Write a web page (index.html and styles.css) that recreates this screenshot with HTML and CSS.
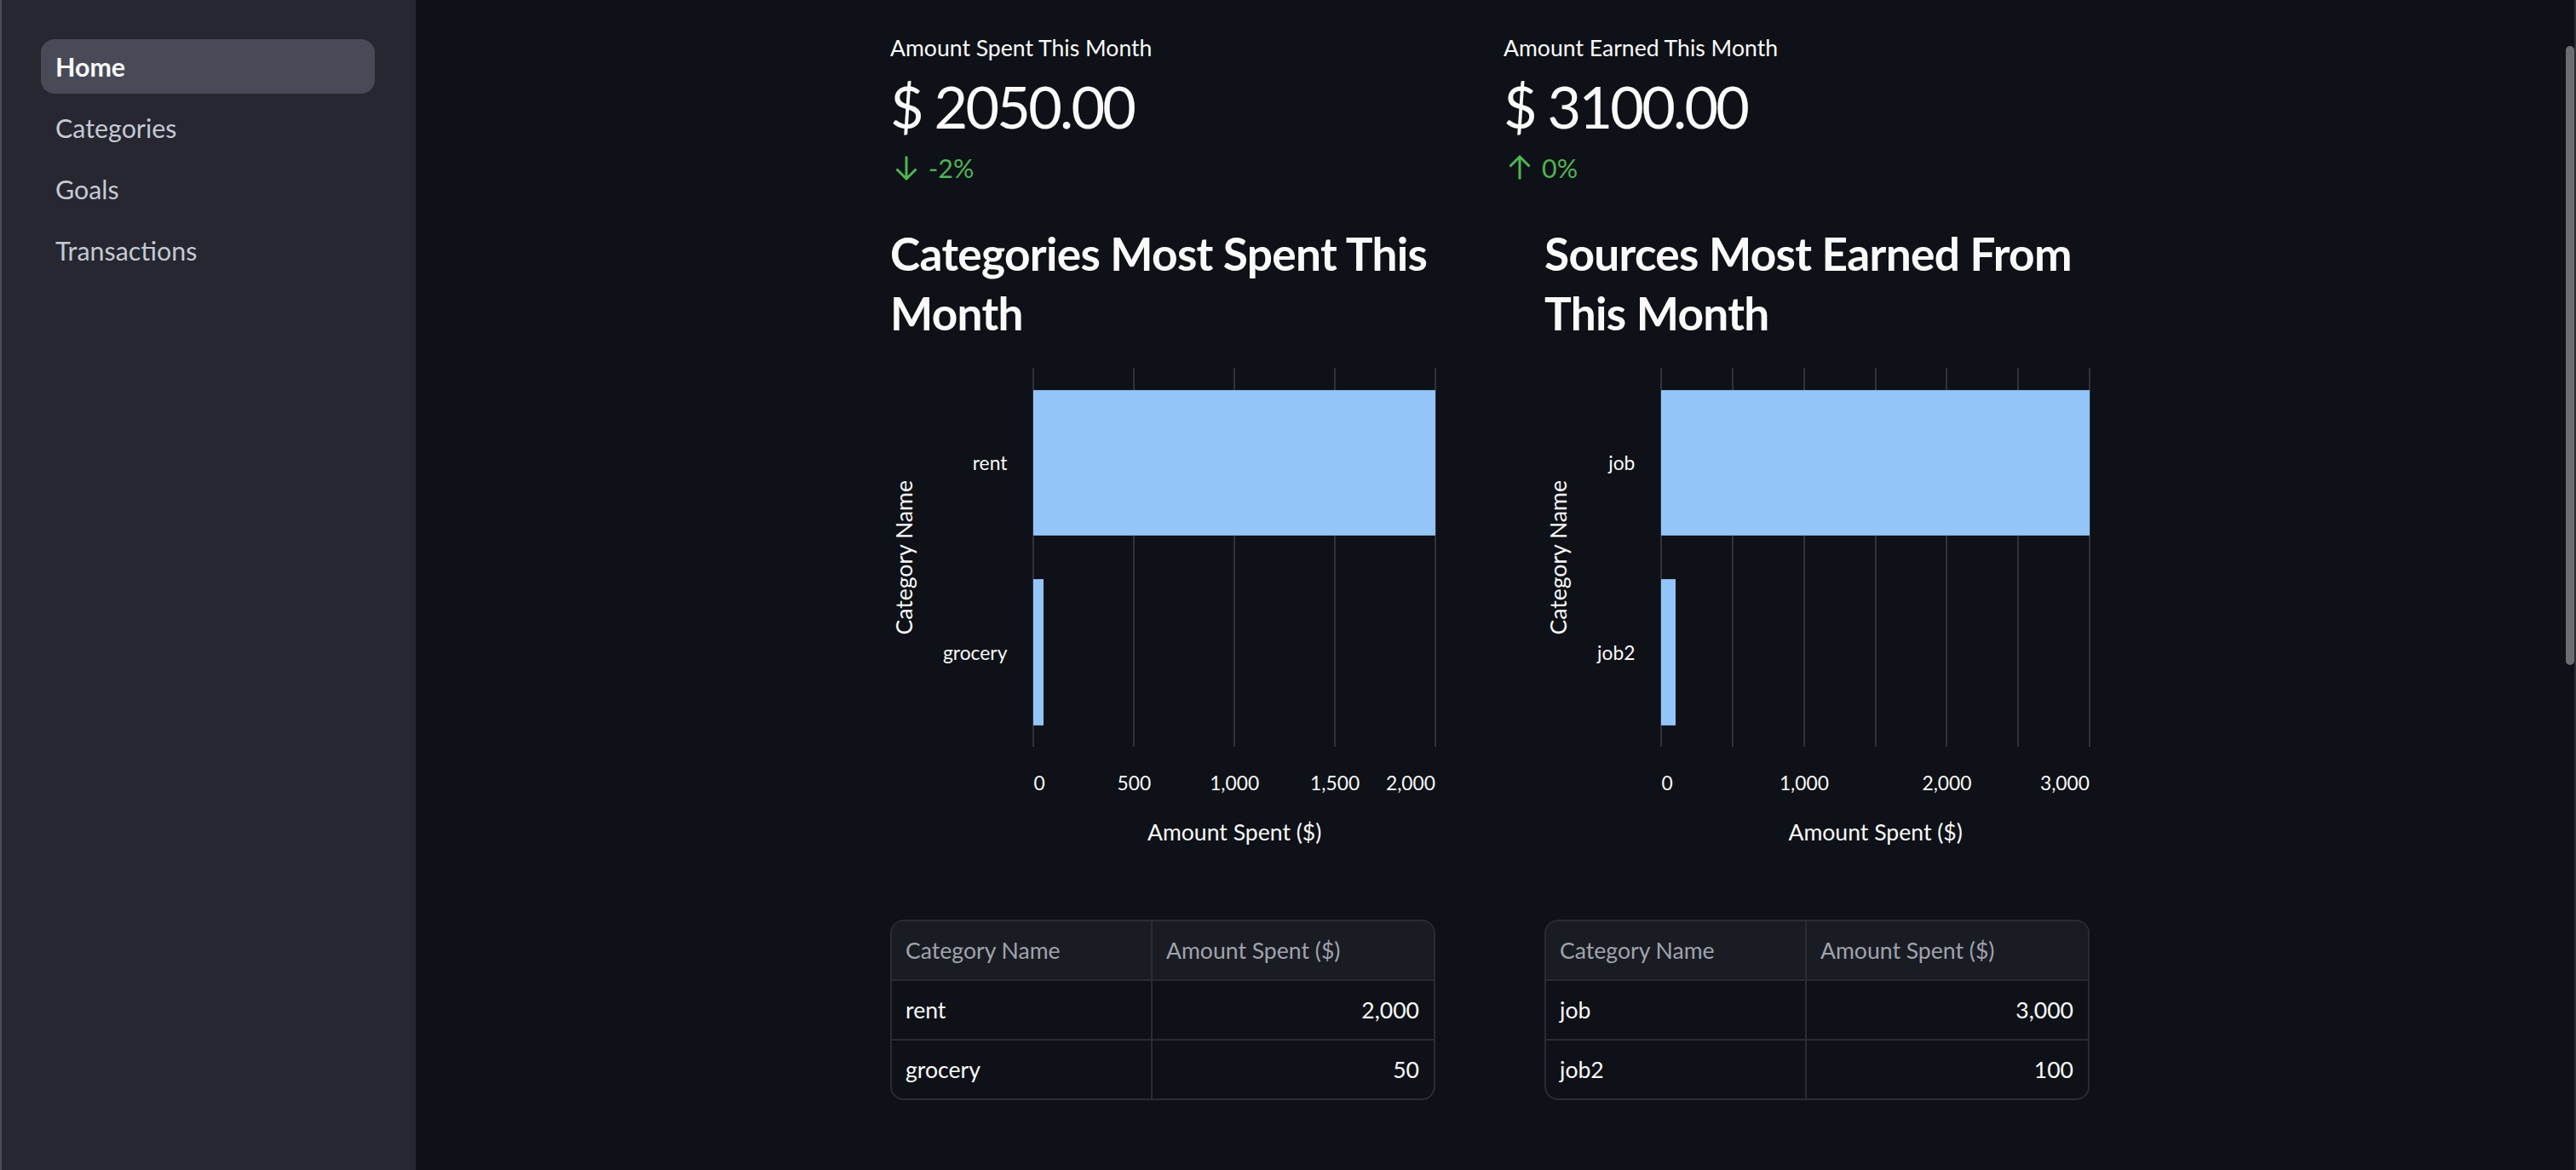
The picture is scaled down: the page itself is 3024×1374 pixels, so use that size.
FILE: index.html
```html
<!DOCTYPE html>
<html lang="en">
<head>
<meta charset="utf-8">
<title>Home</title>
<link rel="stylesheet" href="styles.css">
</head>
<body>
<div class="app">
  <aside class="sidebar">
    <nav class="nav">
      <a class="nav-item active">Home</a>
      <a class="nav-item">Categories</a>
      <a class="nav-item">Goals</a>
      <a class="nav-item">Transactions</a>
    </nav>
  </aside>
  <main class="main">
    <div class="block">
      <section class="metrics">
        <div class="metric">
          <div class="metric-label">Amount Spent This Month</div>
          <div class="metric-value">$ 2050.00</div>
          <div class="metric-delta">
            <svg class="delta-icon" width="26" height="30" viewBox="0 0 26 30"><path d="M13 1.5V28M1.5 16.5L13 28L24.5 16.5" fill="none" stroke="currentColor" stroke-width="3"/></svg>
            <span>-2%</span>
          </div>
        </div>
        <div class="metric">
          <div class="metric-label">Amount Earned This Month</div>
          <div class="metric-value">$ 3100.00</div>
          <div class="metric-delta">
            <svg class="delta-icon" width="26" height="30" viewBox="0 0 26 30"><path d="M13 28.5V2M1.5 13.5L13 2L24.5 13.5" fill="none" stroke="currentColor" stroke-width="3"/></svg>
            <span>0%</span>
          </div>
        </div>
      </section>

      <section class="panels">
        <div class="panel">
          <h3 class="panel-title">Categories Most Spent This Month</h3>
          <div class="chart">
            <div class="y-title">Category Name</div>
            <div class="y-labels">
              <div class="y-band">rent</div>
              <div class="y-band">grocery</div>
            </div>
            <div class="plot">
              <span class="grid" style="left:0%"></span>
              <span class="grid" style="left:25%"></span>
              <span class="grid" style="left:50%"></span>
              <span class="grid" style="left:75%"></span>
              <span class="grid" style="left:100%"></span>
              <div class="band"><div class="bar" style="width:100%"></div></div>
              <div class="band"><div class="bar" style="width:2.5%"></div></div>
            </div>
            <div class="x-labels">
              <span class="tick first">0</span>
              <span class="tick" style="left:25%">500</span>
              <span class="tick" style="left:50%">1,000</span>
              <span class="tick" style="left:75%">1,500</span>
              <span class="tick last">2,000</span>
            </div>
            <div class="x-title">Amount Spent ($)</div>
          </div>
          <div class="table">
            <div class="cell head">Category Name</div>
            <div class="cell head">Amount Spent ($)</div>
            <div class="cell">rent</div>
            <div class="cell num">2,000</div>
            <div class="cell last">grocery</div>
            <div class="cell num last">50</div>
          </div>
        </div>

        <div class="panel">
          <h3 class="panel-title">Sources Most Earned From This Month</h3>
          <div class="chart">
            <div class="y-title">Category Name</div>
            <div class="y-labels">
              <div class="y-band">job</div>
              <div class="y-band">job2</div>
            </div>
            <div class="plot">
              <span class="grid" style="left:0%"></span>
              <span class="grid" style="left:16.667%"></span>
              <span class="grid" style="left:33.333%"></span>
              <span class="grid" style="left:50%"></span>
              <span class="grid" style="left:66.667%"></span>
              <span class="grid" style="left:83.333%"></span>
              <span class="grid" style="left:100%"></span>
              <div class="band"><div class="bar" style="width:100%"></div></div>
              <div class="band"><div class="bar" style="width:3.333%"></div></div>
            </div>
            <div class="x-labels">
              <span class="tick first">0</span>
              <span class="tick" style="left:33.333%">1,000</span>
              <span class="tick" style="left:66.667%">2,000</span>
              <span class="tick last">3,000</span>
            </div>
            <div class="x-title">Amount Spent ($)</div>
          </div>
          <div class="table">
            <div class="cell head">Category Name</div>
            <div class="cell head">Amount Spent ($)</div>
            <div class="cell">job</div>
            <div class="cell num">3,000</div>
            <div class="cell last">job2</div>
            <div class="cell num last">100</div>
          </div>
        </div>
      </section>
    </div>
  </main>
</div>
<div class="scroll-track"></div>
<div class="scroll-thumb"></div>
</body>
</html>
```

FILE: styles.css
```css
* { box-sizing: border-box; }

html, body {
  margin: 0;
  height: 100%;
}

body {
  background: #0e1117;
  color: #fafafa;
  font-family: Lato, "Noto Sans", sans-serif;
  overflow: hidden;
}

.app {
  display: flex;
  min-height: 100vh;
}

/* Sidebar */
.sidebar {
  width: 488px;
  flex: none;
  background: #262730;
  border-left: 2px solid #4b4c55;
}

.nav {
  display: flex;
  flex-direction: column;
  gap: 8px;
  padding: 46px 48px 0 46px;
}

.nav-item {
  height: 64px;
  display: flex;
  align-items: center;
  padding: 0 17px;
  border-radius: 16px;
  font-size: 30.4px;
  color: #c4c9d5;
  text-decoration: none;
}

.nav-item.active {
  background: #494a57;
  color: #fafafa;
  font-weight: 700;
}

/* Main */
.main {
  flex: 1;
  min-width: 0;
  padding-right: 14px;
}

.block {
  width: 1408px;
  margin: 0 auto;
  padding-top: 38px;
}

.metrics {
  display: grid;
  grid-template-columns: 1fr 1fr;
  column-gap: 32px;
}

.metric-label {
  font-size: 26.6px;
  line-height: 36px;
}

.metric-value {
  font-size: 68.4px;
  line-height: 80px;
  margin-top: 11px;
  letter-spacing: -2.8px;
}

.metric-delta {
  display: flex;
  align-items: center;
  gap: 13px;
  height: 36px;
  margin-top: 14px;
  padding-left: 6px;
  color: #4fb553;
  font-size: 30.4px;
  line-height: 36px;
}

.delta-icon { flex: none; }

.panels {
  display: grid;
  grid-template-columns: 1fr 1fr;
  column-gap: 128px;
  margin-top: 47px;
}

.panel-title {
  margin: 0;
  font-size: 53.2px;
  line-height: 70px;
  font-weight: 700;
  letter-spacing: -0.7px;
}

/* Chart */
.chart {
  display: grid;
  grid-template-columns: 32px auto 1fr;
  grid-template-rows: 445px auto auto;
  margin-top: 30px;
}

.y-title {
  grid-row: 1;
  grid-column: 1;
  justify-self: center;
  align-self: center;
  writing-mode: vertical-rl;
  transform: rotate(180deg);
  font-size: 26.6px;
  line-height: 32px;
  white-space: nowrap;
}

.y-labels {
  grid-row: 1;
  grid-column: 2;
  display: flex;
  flex-direction: column;
  padding: 0 31px 0 30px;
  font-size: 22.8px;
}

.y-band {
  flex: 1;
  display: flex;
  align-items: center;
  justify-content: flex-end;
}

.plot {
  grid-row: 1;
  grid-column: 3;
  position: relative;
  display: flex;
  flex-direction: column;
}

.grid {
  position: absolute;
  top: 0;
  bottom: 0;
  width: 2px;
  margin-left: -1px;
  background: #30323c;
}

.band {
  flex: 1;
  display: flex;
  padding: 25.5px 0;
  position: relative;
  z-index: 1;
}

.bar {
  height: 100%;
  background: #93c5f8;
  box-shadow: inset 0 1px 0 #82aedb, inset 0 -1px 0 #82aedb;
}

.x-labels {
  grid-row: 2;
  grid-column: 3;
  position: relative;
  height: 28px;
  margin-top: 28px;
  font-size: 22.8px;
  line-height: 28px;
}

.tick {
  position: absolute;
  top: 0;
  transform: translateX(-50%);
  white-space: nowrap;
}

.tick.first {
  left: 0;
  transform: none;
}

.tick.last {
  right: 0;
  transform: none;
}

.x-title {
  grid-row: 3;
  grid-column: 3;
  text-align: center;
  font-size: 26.6px;
  line-height: 34px;
  margin-top: 27px;
}

/* Table */
.table {
  margin-top: 86px;
  display: grid;
  grid-template-columns: 306px 1fr;
  border: 2px solid #2a2c35;
  border-radius: 16px;
  overflow: hidden;
  font-size: 26.6px;
}

.cell {
  height: 70px;
  display: flex;
  align-items: center;
  padding: 0 17px 0 16px;
  border-bottom: 2px solid #2a2c35;
  white-space: nowrap;
}

.cell:nth-child(odd) {
  border-right: 2px solid #2a2c35;
}

.cell.head {
  background: #1a1c24;
  color: #a0a3ac;
}

.cell.num {
  justify-content: flex-end;
}

.cell.last {
  height: 68px;
  border-bottom: none;
}

/* Overlay scrollbar */
.scroll-track {
  position: fixed;
  top: 0;
  right: 0;
  bottom: 0;
  width: 2px;
  background: #2c2d33;
}

.scroll-thumb {
  position: fixed;
  top: 54px;
  right: 2px;
  width: 10px;
  height: 727px;
  border-radius: 5px;
  background: #6c6d72;
}
```
